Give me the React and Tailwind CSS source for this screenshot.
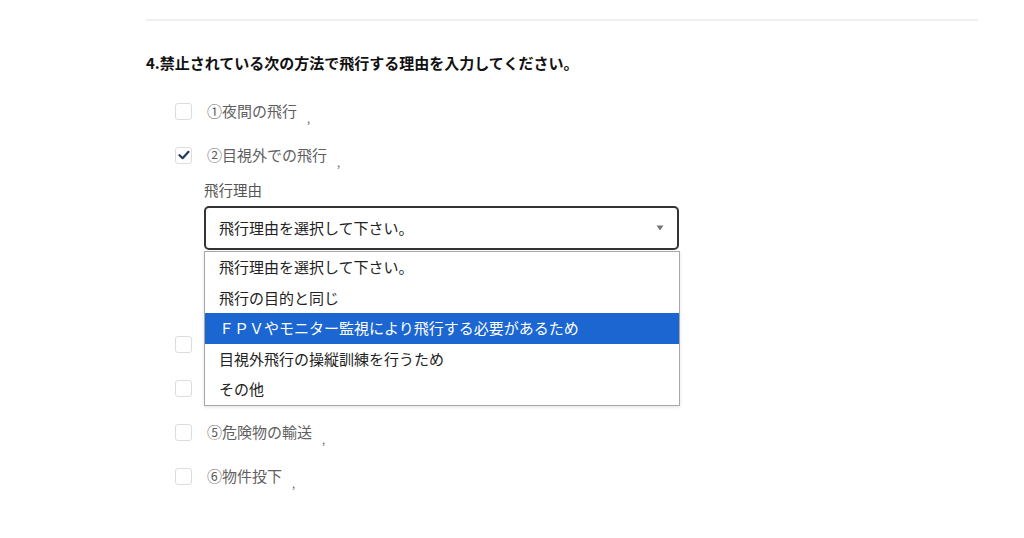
import React from 'react';

const font = { fontFamily: '"Noto Sans CJK JP", "Noto Sans", sans-serif' };

const opciones = [
  '飛行理由を選択して下さい。',
  '飛行の目的と同じ',
  'ＦＰＶやモニター監視により飛行する必要があるため',
  '目視外飛行の操縦訓練を行うため',
  'その他',
];

const Check = ({ checked }) => (
  <div className="w-[17px] h-[17px] shrink-0 rounded-[3px] border border-[#dcdcdc] bg-white flex items-center justify-center">
    {checked && (
      <svg width="12" height="10" viewBox="0 0 12 10" fill="none">
        <path d="M1.5 5.2 L4.6 8.2 L10.5 1.8" stroke="#23395f" strokeWidth="2.2" strokeLinecap="round" strokeLinejoin="round" />
      </svg>
    )}
  </div>
);

// las filas tapadas por el desplegable no muestran su texto
const Fila = ({ label, checked }) => (
  <div className="h-[44px] flex items-center pl-[29px]">
    <Check checked={checked} />
    {label && (
      <>
        <span className="ml-[15px] text-[15px] text-[#5f5f5f]">{label}</span>
        <span className="ml-[10px] mt-[14px] text-[11px] leading-none text-[#666]">,</span>
      </>
    )}
  </div>
);

const App = () => {
  return (
    <div className="w-[1024px] h-[538px] bg-white overflow-hidden" style={font}>
      <div className="ml-[146px] w-[832px] pt-[19px]">
        <div className="border-t-2 border-[#efefef]" />

        <h2 className="mt-[32px] text-[15px] font-bold text-[#111] leading-[20px]">
          4.禁止されている次の方法で飛行する理由を入力してください。
        </h2>

        <div className="mt-[16px]">
          <Fila label="①夜間の飛行" />
          <Fila label="②目視外での飛行" checked />

          {/* Motivo del vuelo */}
          <div className="pl-[58px] pt-[3px] h-[145px]">
            <div className="text-[14.5px] text-[#555] leading-[20px]">飛行理由</div>
            <div className="relative mt-[6px] w-[475px]">
              <div className="h-[44px] border-2 border-[#333] rounded-[5px] flex items-center justify-between px-[13px]">
                <span className="text-[15px] text-[#222]">飛行理由を選択して下さい。</span>
                <svg width="8" height="6" viewBox="0 0 8 6">
                  <path d="M0.5 0.5 H7.5 L4 5.5 Z" fill="#777" />
                </svg>
              </div>
              <ul className="absolute left-0 top-[45px] w-[476px] bg-white border border-[#a8a8a8] shadow-[0_1px_3px_rgba(0,0,0,0.12)] z-10">
                {opciones.map((op, i) => (
                  <li
                    key={op}
                    className={
                      i === 2
                        ? 'h-[30.5px] flex items-center px-[14px] text-[15px] bg-[#1b66d1] text-white'
                        : 'h-[30.5px] flex items-center px-[14px] text-[15px] text-[#222]'
                    }
                  >
                    {op}
                  </li>
                ))}
              </ul>
            </div>
          </div>

          <Fila />
          <Fila />
          <Fila label="⑤危険物の輸送" />
          <Fila label="⑥物件投下" />
        </div>
      </div>
    </div>
  );
};

export default App;
